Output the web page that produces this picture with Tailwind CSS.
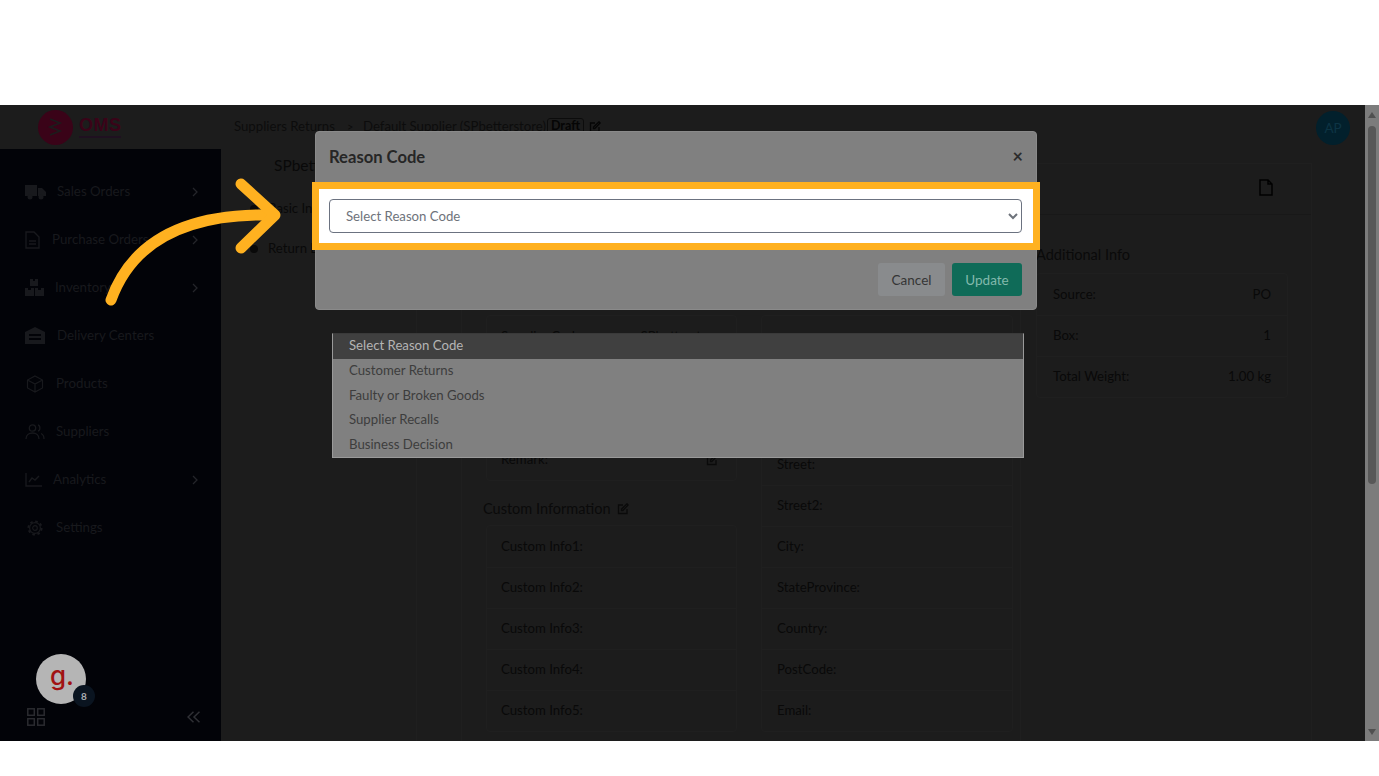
<!DOCTYPE html>
<html lang="en">
<head>
<meta charset="utf-8">
<title>Reason Code</title>
<script src="https://cdn.jsdelivr.net/npm/@tailwindcss/browser@4"></script>
</head>
<body class="bg-white font-['Lato',sans-serif]">
<div class="w-[1379px] h-[776px] overflow-hidden flex flex-col bg-white">
  <div class="h-[105px] shrink-0 bg-white"></div>
  <div class="relative h-[636px] shrink-0 flex overflow-hidden">
    <!-- App -->
    <div class="w-[1365px] h-full flex flex-col bg-[#1c1c1c] overflow-hidden">
      <!-- Topbar -->
      <header class="h-[44px] shrink-0 flex items-center text-[13.2px] text-[#0c0c0c]">
        <div class="w-[234px] shrink-0 flex items-center pl-[38px] gap-[6px]">
          <svg class="w-[35px] h-[35px]" viewBox="0 0 35 35"><circle cx="17.5" cy="17.5" r="17.5" fill="#3a0318"/><path d="M12 9l10 4-10 4 10 4-10 4" fill="none" stroke="#1c1c1c" stroke-width="1.6"/></svg>
          <div class="flex flex-col items-start -mt-[2px]">
            <span class="text-[18px] leading-[22px] font-black text-[#3a0318] tracking-[0.5px] font-['Liberation_Sans',sans-serif]">OMS</span>
            <span class="w-[42px] h-[2px] bg-[#1f1020]"></span>
          </div>
        </div>
        <span class="w-[113px]">Suppliers Returns</span>
        <span class="w-[16px] text-[11px]">&gt;</span>
        <span class="w-[184px] whitespace-nowrap">Default Supplier (SPbetterstore)</span>
        <span class="w-[37px] h-[18px] -mt-[1px] rounded-[3px] border border-[#0c0c0c] flex items-center justify-center text-[12.5px] font-bold text-[#050505]">Draft</span>
        <svg class="ml-[5px] -mt-[1px] w-[12px] h-[12px]" viewBox="0 0 12 12" fill="none" stroke="#050505" stroke-width="1.3"><path d="M6 2H1.5v8.5H10V6M4.500 7.500V6L10 .8l1.200 1.200L5.800 7.500z"/></svg>
        <div class="ml-auto mr-[15px] mt-[2px] w-[34px] h-[34px] rounded-full bg-[#02202c] flex items-center justify-center text-[13.5px] text-[#0d3444]">AP</div>
      </header>
      <div class="flex-1 flex min-h-0">
        <!-- Sidebar -->
        <aside class="w-[221px] shrink-0 h-full bg-[#020308] flex flex-col text-[13.3px] text-[#18191d]">
          <nav class="pt-[19px] flex flex-col">
            <a class="h-[48px] flex items-center pl-[25px]">
              <svg class="w-[21px] h-[16px] -mt-[1px]" viewBox="0 0 21 16" fill="#18191d"><path d="M0 1h12v11H0zM13 4h4l4 4v4h-8z"/><circle cx="5" cy="13" r="2.5"/><circle cx="16" cy="13" r="2.5"/></svg>
              <span class="ml-[11px] w-[135px]">Sales Orders</span>
              <svg class="w-[6px] h-[10px] -mt-[1px]" viewBox="0 0 6 10" fill="none" stroke="#24252a" stroke-width="1.3"><path d="M1 1l4 4-4 4"/></svg>
            </a>
            <a class="h-[48px] flex items-center pl-[25px]">
              <svg class="w-[15px] h-[18px] -mt-[1px]" viewBox="0 0 15 18" fill="none" stroke="#18191d" stroke-width="1.4"><path d="M1 1h8l5 5v11H1zM4 10h7M4 13h7"/></svg>
              <span class="ml-[12px] w-[140px] whitespace-nowrap">Purchase Orders</span>
              <svg class="w-[6px] h-[10px] -mt-[1px]" viewBox="0 0 6 10" fill="none" stroke="#24252a" stroke-width="1.3"><path d="M1 1l4 4-4 4"/></svg>
            </a>
            <a class="h-[48px] flex items-center pl-[25px]">
              <svg class="w-[19px] h-[17px] -mt-[1px]" viewBox="0 0 19 17" fill="#18191d"><path d="M5 0h3v2h2V0h3v7H5zM0 9h3v2h3V9h3v8H0zM10 9h3v2h3V9h3v8h-9z"/></svg>
              <span class="ml-[11px] w-[137px]">Inventory</span>
              <svg class="w-[6px] h-[10px] -mt-[1px]" viewBox="0 0 6 10" fill="none" stroke="#24252a" stroke-width="1.3"><path d="M1 1l4 4-4 4"/></svg>
            </a>
            <a class="h-[48px] flex items-center pl-[25px]">
              <svg class="w-[20px] h-[17px] -mt-[1px]" viewBox="0 0 20 17" fill="#18191d"><path d="M0 5l10-5 10 5v12H0zM4 7v2h12V7zM4 11v2h12v-2z"/></svg>
              <span class="ml-[12px]">Delivery Centers</span>
            </a>
            <a class="h-[48px] flex items-center pl-[26px]">
              <svg class="w-[18px] h-[18px] -mt-[1px]" viewBox="0 0 18 18" fill="none" stroke="#18191d" stroke-width="1.2"><path d="M9 1l7.500 4v8L9 17l-7.500-4V5zM1.500 5L9 9l7.500-4M9 9v8"/></svg>
              <span class="ml-[12px]">Products</span>
            </a>
            <a class="h-[48px] flex items-center pl-[25px]">
              <svg class="w-[20px] h-[16px] -mt-[1px]" viewBox="0 0 20 16" fill="none" stroke="#18191d" stroke-width="1.3"><circle cx="7.500" cy="4" r="3.200"/><path d="M1 15c0-4 3-6 6.500-6s6.500 2 6.500 6M13 1c2.500.5 2.500 5.500 0 6M16 9.500c2 .8 3 2.800 3 5.500"/></svg>
              <span class="ml-[11px]">Suppliers</span>
            </a>
            <a class="h-[48px] flex items-center pl-[25px]">
              <svg class="w-[17px] h-[14px] -mt-[1px]" viewBox="0 0 17 14" fill="none" stroke="#18191d" stroke-width="1.4"><path d="M1 0v13h16M4 9l3-4 3 2 4-4"/></svg>
              <span class="ml-[11px] w-[139px]">Analytics</span>
              <svg class="w-[6px] h-[10px] -mt-[1px]" viewBox="0 0 6 10" fill="none" stroke="#24252a" stroke-width="1.3"><path d="M1 1l4 4-4 4"/></svg>
            </a>
            <a class="h-[48px] flex items-center pl-[27px]">
              <svg class="w-[16px] h-[16px] -mt-[1px]" viewBox="0 0 16 16" fill="none" stroke="#18191d"><circle cx="8" cy="8" r="2.300" stroke-width="1.200"/><circle cx="8" cy="8" r="5.400" stroke-width="1.200"/><circle cx="8" cy="8" r="6.600" stroke-width="2" stroke-dasharray="2.600 2.580"/></svg>
              <span class="ml-[13px]">Settings</span>
            </a>
          </nav>
          <div class="flex-1"></div>
          <div class="relative ml-[36px] w-[50px] h-[50px] rounded-full bg-[#b5b5b5] flex items-center justify-center">
            <span class="text-[26px] leading-none -mt-[6px] ml-[2px] text-[#a11212] font-['Inter',sans-serif] font-medium">g.</span>
            <span class="absolute left-[37px] top-[31px] w-[22px] h-[22px] rounded-full bg-[#0a1420] flex items-center justify-center text-[10px] font-bold text-[#a9adb2]">8</span>
          </div>
          <div class="h-[18px] mt-[4px] mb-[15px] pl-[27px] flex items-center justify-between pr-[21px]">
            <svg class="w-[18px] h-[18px]" viewBox="0 0 18 18" fill="none" stroke="#2a2b30" stroke-width="1.500"><rect x=".8" y=".8" width="6.500" height="6.500"/><rect x="10.700" y=".8" width="6.500" height="6.500"/><rect x=".8" y="10.700" width="6.500" height="6.500"/><rect x="10.700" y="10.700" width="6.500" height="6.500"/></svg>
            <svg class="w-[13px] h-[12px]" viewBox="0 0 13 12" fill="none" stroke="#2f3035" stroke-width="1.500"><path d="M6.500 .8L1 6l5.500 5.200M12.500 .8L7 6l5.500 5.200"/></svg>
          </div>
        </aside>
        <!-- Main -->
        <main class="flex-1 min-w-0 flex text-[13.2px] text-[#090909] overflow-hidden">
          <div class="w-[195px] shrink-0 pl-[29px] flex flex-col">
            <h2 class="h-[34px] flex items-center text-[15.500px] pl-[24px] whitespace-nowrap">SPbetterstore</h2>
            <div class="h-[40px] mt-[6px] flex items-center gap-[10px] whitespace-nowrap"><span class="w-[8px] h-[8px] rounded-full bg-[#090909]"></span>Basic Info</div>
            <div class="h-[40px] flex items-center gap-[10px] whitespace-nowrap"><span class="w-[8px] h-[8px] rounded-full bg-[#090909]"></span>Return Lines</div>
          </div>
          <section class="w-[896px] shrink-0 mt-[14px] border-l border-r border-t border-[#1f1f1f] flex flex-col overflow-hidden">
            <div class="h-[51px] shrink-0 border-b border-[#181818] flex items-center justify-end pr-[38px]">
              <svg class="w-[14px] h-[17px] -mt-[3px]" viewBox="0 0 14 17" fill="none" stroke="#000" stroke-width="1.500"><path d="M1 1h8l4 4v11H1zM9 1v4h4"/></svg>
            </div>
            <div class="flex-1 flex pl-[44px] gap-[15px]">
              <div class="w-[560px] shrink-0 border-l border-r border-[#1f1f1f] pl-[24px] pt-[100px] flex gap-[24px]">
                <div class="w-[251px] shrink-0">
                  <div class="border border-[#1f1f1f] rounded-[4px]">
                    <div class="h-[41px] flex items-center justify-between pl-[14px] pr-[16px]"><span>Supplier Code:</span><span>SPbetterstore</span></div>
                    <div class="h-[41px] flex items-center pl-[14px] border-t border-[#1f1f1f]">Reference:</div>
                    <div class="h-[41px] flex items-center pl-[14px] border-t border-[#1f1f1f]">Reason:</div>
                    <div class="h-[41px] flex items-center justify-between pl-[14px] pr-[18px] border-t border-[#1f1f1f]"><span>Remark:</span><svg class="w-[12px] h-[12px]" viewBox="0 0 12 12" fill="none" stroke="#0a0a0a" stroke-width="1.300"><path d="M6 2H1.500v8.500H10V6M4.500 7.500V6L10 .8l1.200 1.200L5.800 7.500z"/></svg></div>
                  </div>
                  <div class="mt-[16px] mb-[4px] h-[24px] flex items-center gap-[6px] text-[14.500px] -ml-[3px] text-[#0a0a0a]">Custom Information <svg class="w-[12px] h-[12px]" viewBox="0 0 12 12" fill="none" stroke="#0a0a0a" stroke-width="1.300"><path d="M6 2H1.500v8.500H10V6M4.500 7.500V6L10 .8l1.200 1.200L5.800 7.500z"/></svg></div>
                  <div class="border border-[#1f1f1f] rounded-[4px]">
                    <div class="h-[41px] flex items-center pl-[14px]">Custom Info1:</div>
                    <div class="h-[41px] flex items-center pl-[14px] border-t border-[#1f1f1f]">Custom Info2:</div>
                    <div class="h-[41px] flex items-center pl-[14px] border-t border-[#1f1f1f]">Custom Info3:</div>
                    <div class="h-[41px] flex items-center pl-[14px] border-t border-[#1f1f1f]">Custom Info4:</div>
                    <div class="h-[41px] flex items-center pl-[14px] border-t border-[#1f1f1f]">Custom Info5:</div>
                  </div>
                </div>
                <div class="w-[252px] shrink-0">
                  <div class="border border-[#1f1f1f] rounded-[4px]">
                    <div class="h-[46px] flex items-center pl-[15px]">Pick/Del:</div>
                    <div class="h-[41px] flex items-center pl-[15px] border-t border-[#1f1f1f]">Name:</div>
                    <div class="h-[41px] flex items-center pl-[15px] border-t border-[#1f1f1f]">Contact:</div>
                    <div class="h-[41px] flex items-center pl-[15px] border-t border-[#1f1f1f]">Street:</div>
                    <div class="h-[41px] flex items-center pl-[15px] border-t border-[#1f1f1f]">Street2:</div>
                    <div class="h-[41px] flex items-center pl-[15px] border-t border-[#1f1f1f]">City:</div>
                    <div class="h-[41px] flex items-center pl-[15px] border-t border-[#1f1f1f]">StateProvince:</div>
                    <div class="h-[41px] flex items-center pl-[15px] border-t border-[#1f1f1f]">Country:</div>
                    <div class="h-[41px] flex items-center pl-[15px] border-t border-[#1f1f1f]">PostCode:</div>
                    <div class="h-[41px] flex items-center pl-[15px] border-t border-[#1f1f1f]">Email:</div>
                  </div>
                </div>
              </div>
              <div class="w-[252px] shrink-0 pt-[28px]">
                <h3 class="h-[24px] mb-[6px] flex items-center text-[14.500px] text-[#0a0a0a] whitespace-nowrap">Additional Info</h3>
                <div class="border border-[#1f1f1f] rounded-[4px]">
                  <div class="h-[41px] flex items-center justify-between px-[16px]"><span>Source:</span><span>PO</span></div>
                  <div class="h-[41px] flex items-center justify-between px-[16px] border-t border-[#1f1f1f]"><span>Box:</span><span>1</span></div>
                  <div class="h-[41px] flex items-center justify-between px-[16px] border-t border-[#1f1f1f]"><span>Total Weight:</span><span>1.00 kg</span></div>
                </div>
              </div>
            </div>
          </section>
        </main>
      </div>
    </div>
    <!-- Scrollbar -->
    <div class="w-[14px] h-full shrink-0 bg-[#7c7c7c] flex flex-col items-center">
      <svg class="w-[14px] h-[17px] shrink-0" viewBox="0 0 14 17" fill="#505050"><path d="M7 7l4 6H3z"/></svg>
      <div class="mt-[4px] w-[8px] h-[358px] rounded-full bg-[#585858]"></div>
      <svg class="w-[14px] h-[17px] mt-auto shrink-0" viewBox="0 0 14 17" fill="#505050"><path d="M7 11l4-6H3z"/></svg>
    </div>

    <!-- Modal -->
    <div class="absolute left-[315px] top-[26px] w-[722px] h-[179px] rounded-[4px] bg-[#808080] border border-[#8a8a8a]">
      <div class="h-[52px] flex items-center justify-between pl-[13px] pr-[13px]">
        <h1 class="text-[16.600px] font-bold text-[#262626] -mt-[2px]">Reason Code</h1>
        <span class="text-[18px] font-bold leading-none text-[#2c2c2c] -mt-[4px]">&times;</span>
      </div>
      <div class="h-[79px]"></div>
      <div class="flex justify-end gap-[7px] pr-[14px]">
        <button class="w-[67px] h-[33px] pt-[2px] rounded-[3px] bg-[#898b8d] text-[13.500px] text-[#353535]">Cancel</button>
        <button class="w-[70px] h-[33px] pt-[2px] rounded-[3px] bg-[#0f6b58] text-[13.500px] text-[#83b9ac]">Update</button>
      </div>
    </div>

    <!-- Highlight frame -->
    <div class="absolute left-[312px] top-[77px] w-[728px] h-[68px] border-[7px] border-[#ffb120] bg-white flex items-center pl-[10px]">
      <select class="w-[693px] h-[34px] rounded-[4px] border border-[#6b7280] bg-white pl-[12px] pr-[4px] text-[13.200px] text-[#6e737b] font-['Lato',sans-serif]">
        <option>Select Reason Code</option>
      </select>
    </div>

    <!-- Open list -->
    <ul class="absolute left-[332px] top-[228px] w-[692px] h-[125px] bg-[#808080] border border-[#9a9a9a] border-t-[#3a3a3a] text-[13.200px] text-[#3d3d3d]">
      <li class="h-[24.600px] flex items-center pl-[16px] bg-[#404040] text-[#b4b4b4]">Select Reason Code</li>
      <li class="h-[24.600px] flex items-center pl-[16px]">Customer Returns</li>
      <li class="h-[24.600px] flex items-center pl-[16px]">Faulty or Broken Goods</li>
      <li class="h-[24.600px] flex items-center pl-[16px]">Supplier Recalls</li>
      <li class="h-[24.600px] flex items-center pl-[16px]">Business Decision</li>
    </ul>

    <!-- Arrow -->
    <svg class="absolute left-0 top-0 w-[320px] h-[220px] pointer-events-none" viewBox="0 0 320 220" fill="none" stroke="#ffb120" stroke-width="11" stroke-linecap="round" stroke-linejoin="round">
      <path d="M111 195C131 139 182 108 272 110"/>
      <path d="M241 79L275 110L241 143"/>
    </svg>
  </div>
  <div class="flex-1 bg-white"></div>
</div>
</body>
</html>
